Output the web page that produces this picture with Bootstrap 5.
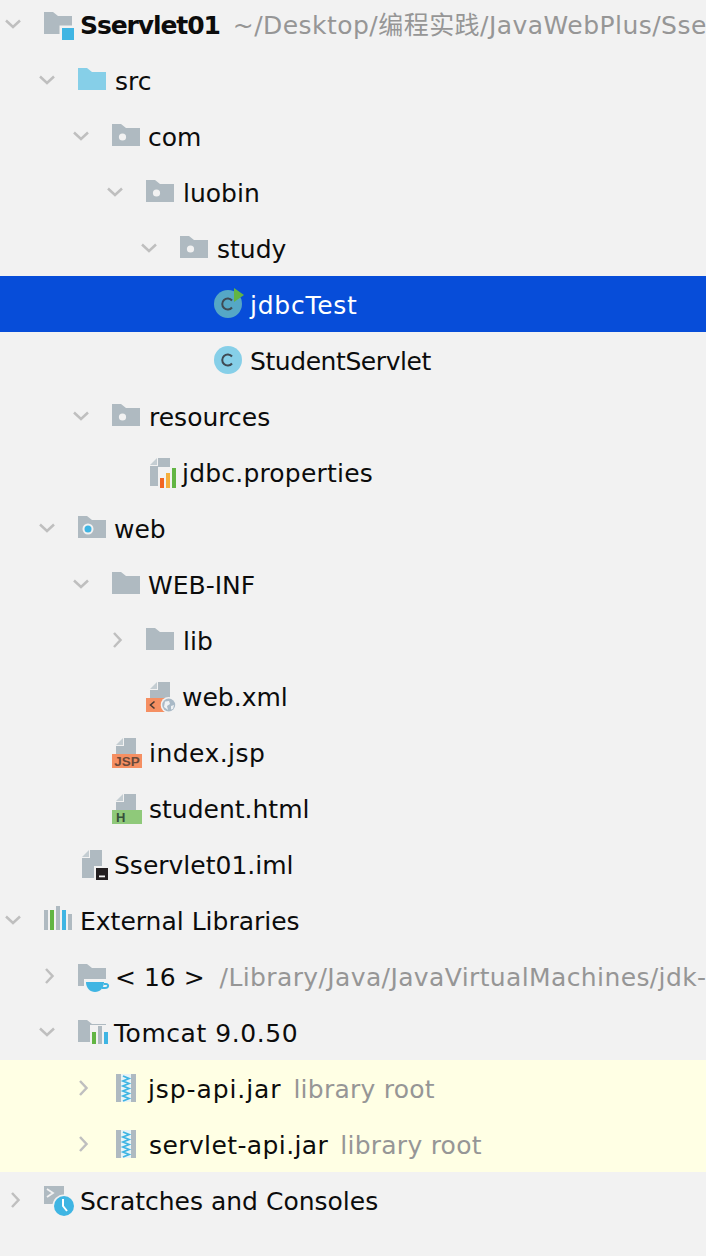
<!doctype html>
<html lang="en">
<head>
<meta charset="utf-8">
<title>Project tree</title>
<link href="https://cdn.jsdelivr.net/npm/bootstrap@5.3.0/dist/css/bootstrap.min.css" rel="stylesheet">
<style>
html,body{background:#f2f2f2;height:100%;overflow:hidden}
body{font-family:"DejaVu Sans","Noto Sans CJK SC",sans-serif;font-size:25px;color:#0c0c0c}
.tree-wrap{margin-top:-4px;padding:0;list-style:none}
.tree-row{height:56px;white-space:nowrap;overflow:hidden}
.tree-row span{padding-top:4px}
.lv0{padding-left:0}.lv1{padding-left:34px}.lv2{padding-left:68px}.lv3{padding-left:102px}.lv4{padding-left:136px}.lv5{padding-left:170px}
.chev{width:44px;height:32px;flex:none;display:block}
.ico{width:36px;height:32px;flex:none;display:block;overflow:visible}
.sel-row{background:#074dd9;color:#fff}
.lib-row{background:#ffffe4}
.dim{color:#969696;margin-left:15px}
.dim-s{margin-left:13px}
.dim-t{margin-left:12px;letter-spacing:.25px}
.fw-strong{font-weight:700;letter-spacing:-1.1px}
.nudge{margin-left:1px}
.sp-a{letter-spacing:.75px}.sp-b{letter-spacing:-.43px}.sp-c{letter-spacing:.2px}.sp-d{letter-spacing:.45px}.sp-e{letter-spacing:.55px}.sp-f{letter-spacing:.9px}.sp-g{letter-spacing:.4px}.sp-i{letter-spacing:.46px}.sp-j{letter-spacing:.38px}
</style>
</head>
<body>
<svg width="0" height="0" class="position-absolute">
<defs>
<path id="fp" d="M0 4H9L14 8H28V26H0Z"/>
<path id="cd" d="M6 12.500L13 19L20 12.500" fill="none" stroke="#bfbfbf" stroke-width="2.500"/>
<path id="cr" d="M12 9L18.500 16L12 23" fill="none" stroke="#bfbfbf" stroke-width="2.500"/>
<g id="pkg"><use href="#fp" fill="#afbac1"/><circle cx="10.500" cy="17" r="3.600" fill="#f2f2f2"/></g>
<g id="fld"><use href="#fp" fill="#afbac1"/></g>
<g id="page"><path d="M11 2V9H4Z" fill="#c4cdd2"/><path d="M12 2H24V18H4V10H12Z" fill="#afbac1"/></g>
<g id="cls"><circle cx="14" cy="16" r="14" fill="#86cfe8"/><path d="M18 12.500A5.500 5.500 0 1 0 18 19.500" fill="none" stroke="#3f4a54" stroke-width="2"/></g>
<g id="jar"><rect x="4" y="2" width="20" height="28" fill="#afbac1"/><rect x="9" y="2" width="10" height="28" fill="#e8f3f6"/><path d="M11 4L17 6.500L11 9L17 11.500L11 14L17 16.500L11 19L17 21.500L11 24L17 26.500L11 29" fill="none" stroke="#3fb5e3" stroke-width="1.800"/></g>
</defs>
</svg>
<ul class="tree-wrap">
<li class="tree-row d-flex align-items-center lv0">
<svg class="chev"><use href="#cd"/></svg>
<svg class="ico"><use href="#fp" fill="#afbac1"/><rect x="15.500" y="17.500" width="17" height="14.500" fill="#f2f2f2"/><rect x="18" y="20" width="12" height="12" fill="#3fb5e3"/></svg>
<span class="fw-strong">Sservlet01</span><span class="dim dim-s sp-i">~/Desktop/编程实践/JavaWebPlus/Sse</span></li>
<li class="tree-row d-flex align-items-center lv1">
<svg class="chev"><use href="#cd"/></svg>
<svg class="ico"><use href="#fp" fill="#86cfe8"/></svg><span class="nudge">src</span></li>
<li class="tree-row d-flex align-items-center lv2">
<svg class="chev"><use href="#cd"/></svg>
<svg class="ico"><use href="#pkg"/></svg><span>com</span></li>
<li class="tree-row d-flex align-items-center lv3">
<svg class="chev"><use href="#cd"/></svg>
<svg class="ico"><use href="#pkg"/></svg><span class="nudge">luobin</span></li>
<li class="tree-row d-flex align-items-center lv4">
<svg class="chev"><use href="#cd"/></svg>
<svg class="ico"><use href="#pkg"/></svg><span class="nudge">study</span></li>
<li class="tree-row d-flex align-items-center lv5 sel-row">
<div class="chev"></div>
<svg class="ico"><circle cx="14" cy="16" r="14" fill="#55a7c6"/><path d="M18 12.500A5.500 5.500 0 1 0 18 19.500" fill="none" stroke="#3f4a54" stroke-width="2"/><path d="M20 0L30 7L20 14Z" fill="#62b543"/></svg><span class="sp-a">jdbcTest</span></li>
<li class="tree-row d-flex align-items-center lv5">
<div class="chev"></div>
<svg class="ico"><use href="#cls"/></svg><span class="sp-b">StudentServlet</span></li>
<li class="tree-row d-flex align-items-center lv2">
<svg class="chev"><use href="#cd"/></svg>
<svg class="ico"><use href="#pkg"/></svg><span class="nudge">resources</span></li>
<li class="tree-row d-flex align-items-center lv3">
<div class="chev"></div>
<svg class="ico"><path d="M11 2V9H4Z" fill="#c4cdd2"/><path d="M12 2H24V11H12V30H4V10H12Z" fill="#afbac1"/><rect x="14" y="22" width="4" height="10" fill="#f26522"/><rect x="20" y="17" width="4" height="15" fill="#f4af3d"/><rect x="26" y="12" width="4" height="20" fill="#62b543"/></svg><span class="sp-c">jdbc.properties</span></li>
<li class="tree-row d-flex align-items-center lv1">
<svg class="chev"><use href="#cd"/></svg>
<svg class="ico"><use href="#fp" fill="#afbac1"/><circle cx="10" cy="17" r="5.500" fill="#f2f2f2"/><circle cx="10" cy="17" r="3.500" fill="#3fb5e3"/></svg><span>web</span></li>
<li class="tree-row d-flex align-items-center lv2">
<svg class="chev"><use href="#cd"/></svg>
<svg class="ico"><use href="#fld"/></svg><span>WEB-INF</span></li>
<li class="tree-row d-flex align-items-center lv3">
<svg class="chev"><use href="#cr"/></svg>
<svg class="ico"><use href="#fld"/></svg><span class="nudge">lib</span></li>
<li class="tree-row d-flex align-items-center lv3">
<div class="chev"></div>
<svg class="ico"><use href="#page"/><rect x="0" y="18" width="24" height="14" fill="#f58f62"/><path d="M8.500 21.500L4.500 25L8.500 28.500" fill="none" stroke="#4a3a33" stroke-width="1.600"/><circle cx="22.700" cy="25" r="8" fill="#f2f2f2"/><circle cx="22.700" cy="25" r="6.500" fill="#a9b9c6"/><path d="M19 21.500L23 21L24 24L21 26L22 30L18 27ZM25 26L28 25L27 29L25 29.500Z" fill="#eef1f3"/></svg><span>web.xml</span></li>
<li class="tree-row d-flex align-items-center lv2">
<div class="chev"></div>
<svg class="ico"><use href="#page"/><rect x="0" y="18" width="30" height="14" fill="#f58f62"/><text x="15" y="30" text-anchor="middle" font-family="Liberation Sans,sans-serif" font-weight="700" font-size="13.500" fill="#6b4a3a">JSP</text></svg><span class="nudge sp-d">index.jsp</span></li>
<li class="tree-row d-flex align-items-center lv2">
<div class="chev"></div>
<svg class="ico"><use href="#page"/><rect x="0" y="18" width="30" height="14" fill="#8fc97a"/><text x="4" y="30" font-family="Liberation Sans,sans-serif" font-weight="700" font-size="13" fill="#37503a">H</text></svg><span class="nudge">student.html</span></li>
<li class="tree-row d-flex align-items-center lv1">
<div class="chev"></div>
<svg class="ico"><path d="M11 2V9H4Z" fill="#c4cdd2"/><path d="M12 2H24V18H16V30H4V10H12Z" fill="#afbac1"/><rect x="18" y="20" width="12" height="12" fill="#231f20"/><rect x="21" y="27.500" width="6" height="1.800" fill="#f2f2f2"/></svg><span>Sservlet01.iml</span></li>
<li class="tree-row d-flex align-items-center lv0">
<svg class="chev"><use href="#cd"/></svg>
<svg class="ico"><rect x="0" y="6" width="4" height="20" fill="#afbac1"/><rect x="6" y="6" width="4" height="20" fill="#62b543"/><rect x="12" y="2" width="4" height="24" fill="#afbac1"/><rect x="18" y="6" width="4" height="20" fill="#3fb5e3"/><rect x="24" y="10" width="4" height="16" fill="#afbac1"/></svg><span>External Libraries</span></li>
<li class="tree-row d-flex align-items-center lv1">
<svg class="chev"><use href="#cr"/></svg>
<svg class="ico"><use href="#fp" fill="#afbac1"/><rect x="6" y="19" width="24" height="8" fill="#f2f2f2"/><path d="M8 22H26C26 28 22 32 17 32C12 32 8 28 8 22Z" fill="#3fb5e3"/><path d="M26 24H28C31 24 31 28 27 28H24" fill="none" stroke="#3fb5e3" stroke-width="2"/></svg><span class="nudge">&lt; 16 &gt;</span><span class="dim sp-j">/Library/Java/JavaVirtualMachines/jdk-</span></li>
<li class="tree-row d-flex align-items-center lv1">
<svg class="chev"><use href="#cd"/></svg>
<svg class="ico"><use href="#fp" fill="#afbac1"/><rect x="12" y="9" width="20" height="19" fill="#f2f2f2"/><rect x="14" y="16" width="4" height="12" fill="#62b543"/><rect x="20" y="10" width="4" height="18" fill="#afbac1"/><rect x="26" y="16" width="4" height="12" fill="#3fb5e3"/></svg><span class="sp-e">Tomcat 9.0.50</span></li>
<li class="tree-row d-flex align-items-center lv2 lib-row">
<svg class="chev"><use href="#cr"/></svg>
<svg class="ico"><use href="#jar"/></svg><span class="sp-f">jsp-api.jar</span><span class="dim dim-t">library root</span></li>
<li class="tree-row d-flex align-items-center lv2 lib-row">
<svg class="chev"><use href="#cr"/></svg>
<svg class="ico"><use href="#jar"/></svg><span class="nudge sp-g">servlet-api.jar</span><span class="dim dim-t">library root</span></li>
<li class="tree-row d-flex align-items-center lv0">
<svg class="chev"><use href="#cr"/></svg>
<svg class="ico"><rect x="0" y="2" width="20" height="18" fill="#afbac1"/><path d="M3 5L9 9L3 13" fill="none" stroke="#f2f2f2" stroke-width="1.800"/><circle cx="20" cy="22" r="11.500" fill="#f2f2f2"/><circle cx="20" cy="22" r="10" fill="#3fb5e3"/><path d="M19 15V22L23 27" fill="none" stroke="#fff" stroke-width="2"/></svg><span>Scratches and Consoles</span></li>
</ul>
<script src="https://cdn.jsdelivr.net/npm/bootstrap@5.3.0/dist/js/bootstrap.bundle.min.js"></script>
</body>
</html>
